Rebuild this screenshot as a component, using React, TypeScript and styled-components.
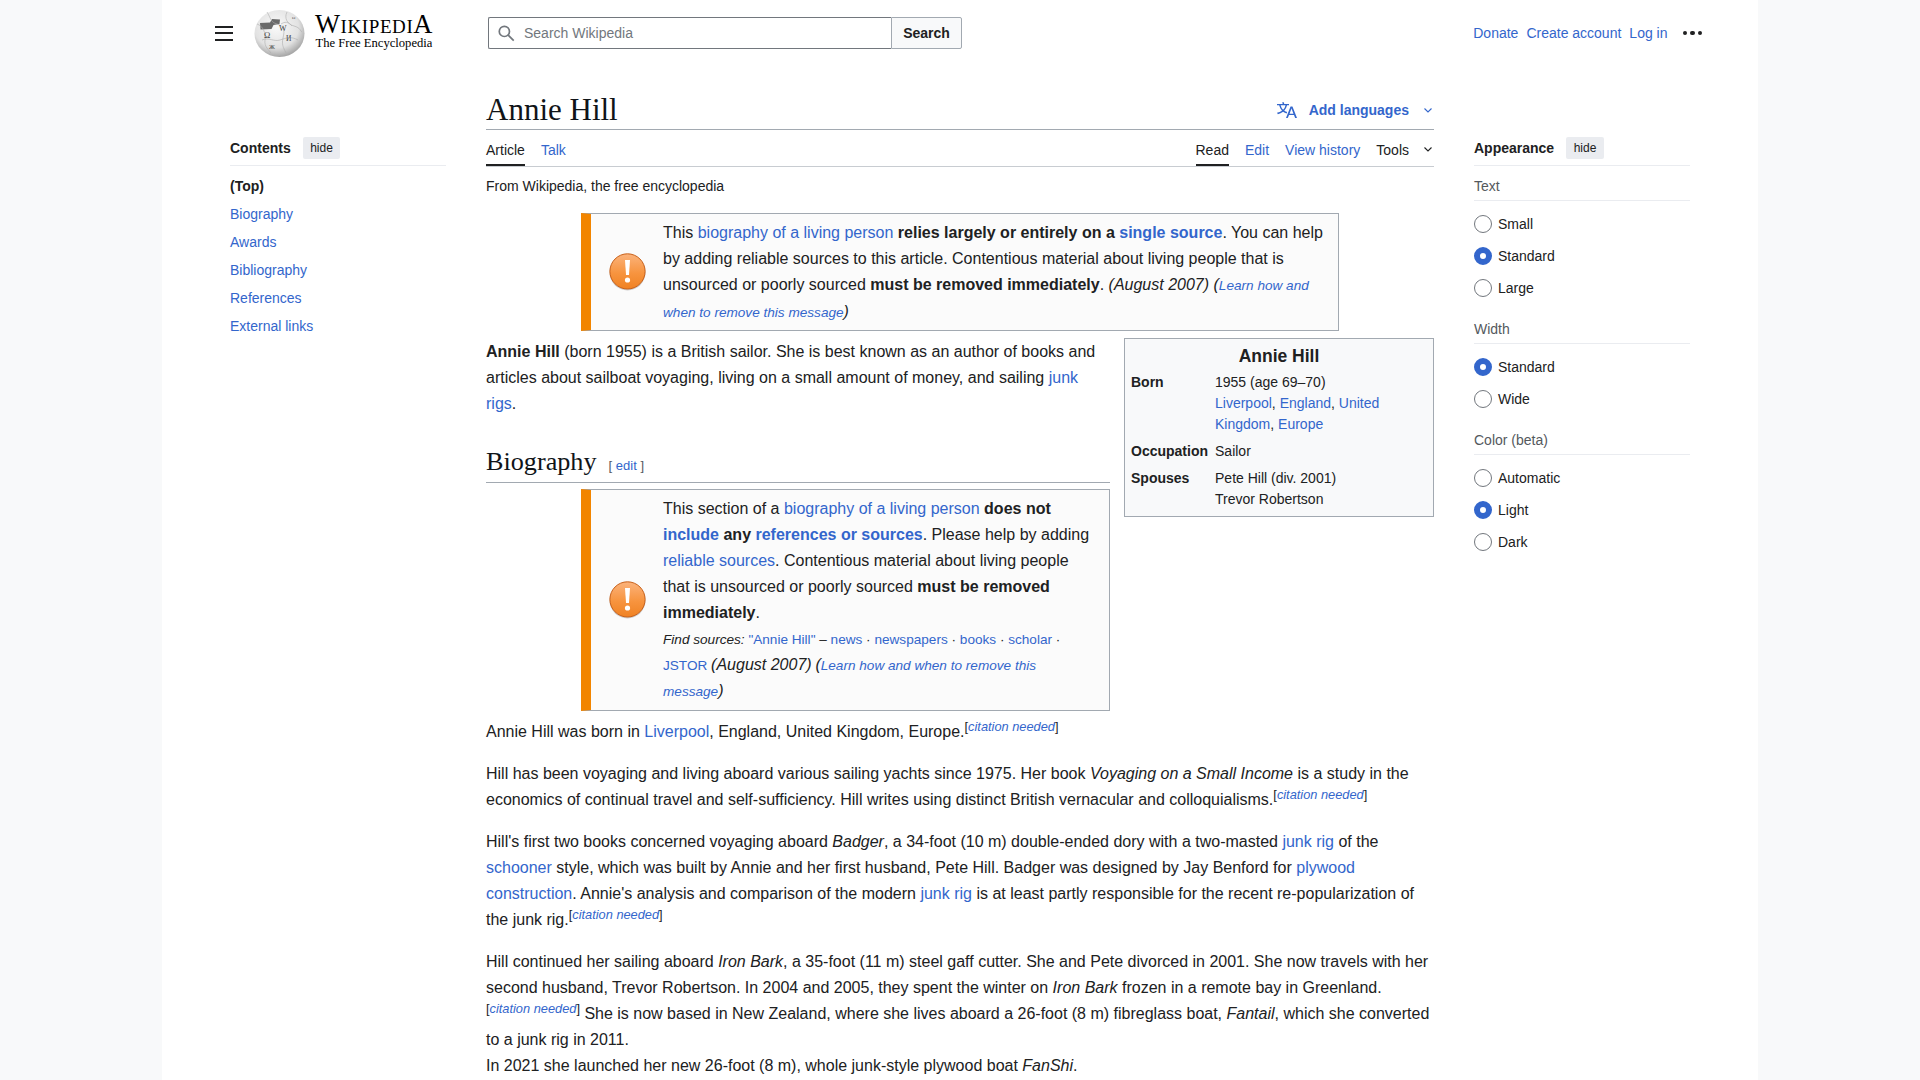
import React from "react";
import styled, { createGlobalStyle } from "styled-components";

const GlobalStyle = createGlobalStyle`
  html, body {
    margin: 0;
    padding: 0;
    height: 100%;
    overflow: hidden;
    background: #f8f9fa;
    color: #202122;
    font-family: "Liberation Sans", Arial, sans-serif;
    font-size: 14px;
  }
  a {
    color: #3366cc;
    text-decoration: none;
  }
`;

const Page = styled.div`
  width: 1596px;
  height: 1080px;
  margin: 0 auto;
  background: #fff;
  overflow: hidden;
`;

/* header */
const Header = styled.header`
  display: flex;
  align-items: center;
  height: 66px;
  padding: 0 56px 0 53px;
`;

const Burger = styled.div`
  width: 18px;
  height: 15px;
  margin-right: 21px;
  border-top: 2px solid #202122;
  border-bottom: 2px solid #202122;
  box-sizing: border-box;
  position: relative;
  &::after {
    content: "";
    position: absolute;
    left: 0;
    right: 0;
    top: 4.5px;
    height: 2px;
    background: #202122;
  }
`;

const Logo = styled.div`
  display: flex;
  align-items: center;
  width: 234px;
`;

const Wordmark = styled.div`
  margin: -2px 0 0 8px;
  font-family: "Liberation Serif", serif;
  color: #000;
  text-align: center;
  width: 122px;
`;

const WordmarkTitle = styled.div`
  font-size: 26.5px;
  line-height: 22px;
  font-variant: small-caps;
  letter-spacing: 0.6px;
  white-space: nowrap;
`;

const WordmarkTag = styled.div`
  font-size: 12.6px;
  line-height: 16px;
  white-space: nowrap;
`;

const Search = styled.form`
  display: flex;
  width: 474px;
  height: 32px;
  margin: 0;
`;

const SearchInput = styled.div`
  flex: 1;
  display: flex;
  align-items: center;
  gap: 9px;
  padding-left: 9px;
  border: 1px solid #72777d;
  border-right: 0;
  border-radius: 2px 0 0 2px;
  color: #72777d;
`;

const SearchButton = styled.div`
  width: 71px;
  display: flex;
  align-items: center;
  justify-content: center;
  border: 1px solid #a2a9b1;
  border-radius: 0 2px 2px 0;
  background: #f8f9fa;
  font-weight: 700;
  box-sizing: border-box;
`;

const UserLinks = styled.nav`
  margin-left: auto;
  display: flex;
  align-items: center;
  gap: 8px;
`;

const Dots = styled.div`
  display: flex;
  gap: 3px;
  margin-left: 7px;
  i {
    width: 4.5px;
    height: 4.5px;
    border-radius: 50%;
    background: #202122;
  }
`;

/* three columns */
const Columns = styled.div`
  display: grid;
  grid-template-columns: 216px 948px 216px;
  column-gap: 40px;
  padding: 0 68px;
`;

const Sidebar = styled.aside`
  padding-top: 71px;
`;

const SideHead = styled.div`
  display: flex;
  align-items: flex-start;
  gap: 12px;
  height: 28px;
  line-height: 22px;
  border-bottom: 1px solid #eaecf0;
  font-weight: 700;
`;

const HideButton = styled.span`
  display: inline-block;
  padding: 0 7.5px;
  height: 22px;
  line-height: 22px;
  background: #eaecf0;
  border-radius: 2px;
  font-size: 12px;
  font-weight: 400;
`;

const TocList = styled.ul`
  list-style: none;
  margin: 6px 0 0;
  padding: 0;
`;

const TocItem = styled.li<{ $top?: boolean }>`
  height: 28px;
  line-height: 28px;
  font-weight: ${(p) => (p.$top ? 700 : 400)};
`;

const OptionGroup = styled.div`
  margin-bottom: 11px;
`;

const OptionLabel = styled.div`
  height: 28px;
  line-height: 28px;
  margin-top: 6px;
  color: #54595d;
  border-bottom: 1px solid #eaecf0;
  margin-bottom: 7px;
`;

const OptionRow = styled.div`
  display: flex;
  align-items: center;
  gap: 6px;
  height: 32px;
`;

const Radio = styled.span<{ $on?: boolean }>`
  width: 18px;
  height: 18px;
  box-sizing: border-box;
  border-radius: 50%;
  background: #fff;
  border: ${(p) => (p.$on ? "6px solid #3366cc" : "1px solid #72777d")};
`;

/* main column */
const Main = styled.main``;

const TitleBar = styled.div`
  display: flex;
  align-items: center;
  justify-content: space-between;
  height: 64px;
  border-bottom: 1px solid #a2a9b1;
  box-sizing: border-box;
`;

const PageTitle = styled.h1`
  margin: 24px 0 0;
  font-family: "Liberation Serif", serif;
  font-weight: 400;
  font-size: 31px;
  line-height: 38px;
  color: #101418;
`;

const LangButton = styled.div`
  display: flex;
  align-items: center;
  margin-top: 25px;
  color: #3366cc;
  font-weight: 700;
`;

const Tabs = styled.div`
  display: flex;
  justify-content: space-between;
  height: 37px;
  border-bottom: 1px solid #c8ccd1;
  box-sizing: border-box;
`;

const TabGroup = styled.div`
  display: flex;
  gap: 16px;
`;

const Tab = styled.a<{ $active?: boolean }>`
  display: flex;
  align-items: center;
  height: 36px;
  box-sizing: border-box;
  padding-top: 5px;
  color: ${(p) => (p.$active ? "#202122" : "#3366cc")};
  border-bottom: 2px solid ${(p) => (p.$active ? "#202122" : "transparent")};
`;

const ToolsTab = styled(Tab)`
  color: #202122;
`;

const Chevron = styled.svg`
  margin-left: 15px;
  margin-right: 2px;
`;

const SiteSub = styled.div`
  margin: 5px 0 13px;
  height: 28px;
  line-height: 28px;
`;

const Body = styled.div`
  font-size: 16px;
  line-height: 26px;
`;

const Ambox = styled.div<{ $wide?: boolean }>`
  display: flex;
  align-items: center;
  box-sizing: border-box;
  width: ${(p) => (p.$wide ? "758px" : "529px")};
  margin-left: 95px;
  border: 1px solid #a2a9b1;
  border-left: 10px solid #f28500;
  background: #fbfbfb;
`;

const AmboxIcon = styled.div`
  flex: 0 0 72px;
  display: flex;
  justify-content: center;
`;

const AmboxText = styled.div`
  flex: 1;
  padding: 6px 14px 4px 0;
`;

const Small = styled.span`
  font-size: 13.6px;
`;

const FindSources = styled.div`
  font-size: 13.6px;
  margin: 1px 0;
`;

const DateNote = styled.i`
  font-size: 16px;
  line-height: 1;
`;

const Infobox = styled.table`
  float: right;
  clear: right;
  width: 310px;
  margin: 7px 0 7px 14px;
  padding: 3px;
  box-sizing: border-box;
  border: 1px solid #a2a9b1;
  background: #f8f9fa;
  font-size: 14px;
  line-height: 21px;
  border-spacing: 3px;
  th, td {
    text-align: left;
    vertical-align: top;
    padding: 3px 0 0;
  }
  td {
    padding-left: 4px;
  }
`;

const InfoTitle = styled.th`
  && {
    font-size: 17.5px;
    line-height: 19px;
    text-align: center;
    padding: 2px 0 0;
  }
`;

const Para = styled.p`
  margin: 8px 0 16px;
`;

const SectionHead = styled.h2`
  margin: 23px 0 6px;
  height: 43px;
  padding-top: 5px;
  box-sizing: border-box;
  overflow: hidden;
  border-bottom: 1px solid #a2a9b1;
  font-family: "Liberation Serif", serif;
  font-weight: 400;
  font-size: 26.2px;
  line-height: 33px;
  color: #101418;
`;

const EditLink = styled.span`
  margin-left: 12px;
  font-family: "Liberation Sans", Arial, sans-serif;
  font-size: 13px;
  color: #54595d;
`;

const Sup = styled.sup`
  font-size: 12.8px;
  line-height: 1;
  vertical-align: super;
  white-space: nowrap;
  a {
    font-style: italic;
  }
`;

const Language = () => (
  <svg width="20" height="20" viewBox="0 0 20 20" fill="#3366cc" style={{ marginRight: 12 }}>
    <path d="M20 18h-1.44a.6.6 0 01-.4-.12.8.8 0 01-.23-.31L17 15h-5l-1 2.54a.8.8 0 01-.22.3.6.6 0 01-.4.14H9l4.55-11.47h1.89zm-3.53-4.31L14.89 9.5a12 12 0 01-.39-1.24q-.09.37-.19.69l-.19.56-1.58 4.19zm-6.3-1.58a13.4 13.4 0 01-2.91-1.41 11.46 11.46 0 002.81-5.37H12V4H7.31a4 4 0 00-.2-.56C6.87 2.79 6.6 2 6.6 2l-1.47.5s.4.89.6 1.5H0v1.33h2.15A11.23 11.23 0 005 10.7a17.2 17.2 0 01-5 2.1q.56.82.87 1.38a23.3 23.3 0 005.22-2.51 15.6 15.6 0 003.56 1.77zM3.63 5.33h4.91a8.1 8.1 0 01-2.45 4.45 9.1 9.1 0 01-2.46-4.45" />
  </svg>
);

const Down = ({ color = "#202122" }: { color?: string }) => (
  <Chevron width="8" height="5" viewBox="0 0 8 5" fill="none" stroke={color} strokeWidth="1.1">
    <path d="M.5.5 4 4 7.5.5" />
  </Chevron>
);

const Globe = () => (
  <svg width="51" height="47" viewBox="0 0 51 47">
    <defs>
      <radialGradient id="sphere" cx="44%" cy="36%" r="68%">
        <stop offset="0" stopColor="#fafafa" />
        <stop offset="0.65" stopColor="#e2e2e2" />
        <stop offset="1" stopColor="#9a9a9a" />
      </radialGradient>
    </defs>
    <ellipse cx="25.5" cy="23.5" rx="25" ry="23.5" fill="url(#sphere)" />
    <path d="M6 13l10-.5 2-3.5 8 .5-.5 4.5-6 1-2 4-11 .5z" fill="#6a6a6a" />
    <g fill="none" stroke="#adadad" strokeWidth=".6">
      <path d="M3 14c6 2 9 9 8 16s4 10 6 13" />
      <path d="M13 2c4 6 3 10 10 12s8 6 6 14 2 12 3 15" />
      <path d="M33 2c-3 6 0 12 7 14s6 5 8 6" />
      <path d="M8 30c7-3 12 2 18 0s11-4 18 0" />
      <path d="M27 14c6-4 9 0 11 2" />
    </g>
    <g fontFamily="Liberation Serif, serif" fill="#444">
      <text x="10" y="28" fontSize="8.5">Ω</text>
      <text x="25" y="21" fontSize="8">W</text>
      <text x="32" y="31" fontSize="7.5">И</text>
      <text x="15" y="39" fontSize="6.5">Ж</text>
      <text x="38" y="9" fontSize="5">ω</text>
    </g>
  </svg>
);

const Warning = () => (
  <svg width="37" height="38" viewBox="0 0 37 38">
    <defs>
      <linearGradient id="amber" x1="0" y1="0" x2="0" y2="1">
        <stop offset="0" stopColor="#fbb37c" />
        <stop offset="0.55" stopColor="#f7943f" />
        <stop offset="1" stopColor="#f08223" />
      </linearGradient>
    </defs>
    <circle cx="18.5" cy="19.4" r="18" fill="#ccc" />
    <circle cx="18.5" cy="18.4" r="17.6" fill="url(#amber)" stroke="#c9611a" strokeWidth="1" />
    <path d="M16 7h5l-1 15h-3z" fill="#fff" />
    <circle cx="18.5" cy="27" r="2.6" fill="#fff" />
  </svg>
);

const Needed = () => (
  <Sup>
    [<a href="#c">citation needed</a>]
  </Sup>
);

const toc = ["Biography", "Awards", "Bibliography", "References", "External links"];

const appearance = [
  { label: "Text", options: [["Small"], ["Standard", true], ["Large"]] },
  { label: "Width", options: [["Standard", true], ["Wide"]] },
  { label: "Color (beta)", options: [["Automatic"], ["Light", true], ["Dark"]] },
] as { label: string; options: [string, boolean?][] }[];

export default function App() {
  return (
    <Page>
      <GlobalStyle />
      <Header>
        <Burger />
        <Logo>
          <Globe />
          <Wordmark>
            <WordmarkTitle>WikipediA</WordmarkTitle>
            <WordmarkTag>The Free Encyclopedia</WordmarkTag>
          </Wordmark>
        </Logo>
        <Search>
          <SearchInput>
            <svg width="17" height="17" viewBox="0 0 20 20" fill="none" stroke="#72777d" strokeWidth="2">
              <circle cx="7.5" cy="7.5" r="6" />
              <path d="M12 12l6.5 6.5" />
            </svg>
            Search Wikipedia
          </SearchInput>
          <SearchButton>Search</SearchButton>
        </Search>
        <UserLinks>
          <a href="#d">Donate</a>
          <a href="#c">Create account</a>
          <a href="#l">Log in</a>
          <Dots>
            <i />
            <i />
            <i />
          </Dots>
        </UserLinks>
      </Header>
      <Columns>
        <Sidebar>
          <SideHead>
            Contents <HideButton>hide</HideButton>
          </SideHead>
          <TocList>
            <TocItem $top>(Top)</TocItem>
            {toc.map((t) => (
              <TocItem key={t}>
                <a href="#t">{t}</a>
              </TocItem>
            ))}
          </TocList>
        </Sidebar>
        <Main>
          <TitleBar>
            <PageTitle>Annie Hill</PageTitle>
            <LangButton>
              <Language />
              Add languages
              <Down color="#3366cc" />
            </LangButton>
          </TitleBar>
          <Tabs>
            <TabGroup>
              <Tab $active>Article</Tab>
              <Tab href="#t">Talk</Tab>
            </TabGroup>
            <TabGroup>
              <Tab $active>Read</Tab>
              <Tab href="#e">Edit</Tab>
              <Tab href="#h">View history</Tab>
              <ToolsTab as="span">
                Tools
                <Down />
              </ToolsTab>
            </TabGroup>
          </Tabs>
          <SiteSub>From Wikipedia, the free encyclopedia</SiteSub>
          <Body>
            <Ambox $wide>
              <AmboxIcon>
                <Warning />
              </AmboxIcon>
              <AmboxText>
                This <a href="#b">biography of a living person</a> <b>relies largely or entirely on a <a href="#s">single source</a></b>. You can help by adding reliable sources to this article. Contentious material about living people that is unsourced or poorly sourced <b>must be removed immediately</b>. <i>(August 2007)</i> <i>(<Small><a href="#l">Learn how and when to remove this message</a></Small>)</i>
              </AmboxText>
            </Ambox>
            <Infobox>
              <tbody>
                <tr>
                  <InfoTitle colSpan={2}>Annie Hill</InfoTitle>
                </tr>
                <tr>
                  <th>Born</th>
                  <td>
                    1955 (age 69–70)
                    <br />
                    <a href="#l">Liverpool</a>, <a href="#e">England</a>, <a href="#u">United Kingdom</a>, <a href="#eu">Europe</a>
                  </td>
                </tr>
                <tr>
                  <th>Occupation</th>
                  <td>Sailor</td>
                </tr>
                <tr>
                  <th>Spouses</th>
                  <td>
                    Pete Hill (div. 2001)
                    <br />
                    Trevor Robertson
                  </td>
                </tr>
              </tbody>
            </Infobox>
            <Para>
              <b>Annie Hill</b> (born 1955) is a British sailor. She is best known as an author of books and articles about sailboat voyaging, living on a small amount of money, and sailing <a href="#j">junk rigs</a>.
            </Para>
            <SectionHead>
              Biography
              <EditLink>
                [ <a href="#e">edit</a> ]
              </EditLink>
            </SectionHead>
            <Ambox>
              <AmboxIcon>
                <Warning />
              </AmboxIcon>
              <AmboxText>
                This section of a <a href="#b">biography of a living person</a> <b>does not <a href="#i">include</a> any <a href="#r">references or sources</a></b>. Please help by adding <a href="#r">reliable sources</a>. Contentious material about living people that is unsourced or poorly sourced <b>must be removed immediately</b>.
                <FindSources>
                  <i>Find sources:</i> <a href="#a">"Annie Hill"</a> – <a href="#n">news</a> · <a href="#n">newspapers</a> · <a href="#b">books</a> · <a href="#s">scholar</a> · <a href="#j">JSTOR</a> <DateNote>(August 2007)</DateNote> <DateNote>(<Small><a href="#l">Learn how and when to remove this message</a></Small>)</DateNote>
                </FindSources>
              </AmboxText>
            </Ambox>
            <Para>
              Annie Hill was born in <a href="#l">Liverpool</a>, England, United Kingdom, Europe.<Needed />
            </Para>
            <Para>
              Hill has been voyaging and living aboard various sailing yachts since 1975. Her book <i>Voyaging on a Small Income</i> is a study in the economics of continual travel and self-sufficiency. Hill writes using distinct British vernacular and colloquialisms.<Needed />
            </Para>
            <Para>
              Hill's first two books concerned voyaging aboard <i>Badger</i>, a 34-foot (10 m) double-ended dory with a two-masted <a href="#j">junk rig</a> of the <a href="#s">schooner</a> style, which was built by Annie and her first husband, Pete Hill. Badger was designed by Jay Benford for <a href="#p">plywood construction</a>. Annie's analysis and comparison of the modern <a href="#j">junk rig</a> is at least partly responsible for the recent re-popularization of the junk rig.<Needed />
            </Para>
            <Para>
              Hill continued her sailing aboard <i>Iron Bark</i>, a 35-foot (11 m) steel gaff cutter. She and Pete divorced in 2001. She now travels with her second husband, Trevor Robertson. In 2004 and 2005, they spent the winter on <i>Iron Bark</i> frozen in a remote bay in Greenland.<Needed /> She is now based in New Zealand, where she lives aboard a 26-foot (8 m) fibreglass boat, <i>Fantail</i>, which she converted to a junk rig in 2011.
              <br />
              In 2021 she launched her new 26-foot (8 m), whole junk-style plywood boat <i>FanShi</i>.
            </Para>
          </Body>
        </Main>
        <Sidebar>
          <SideHead>
            Appearance <HideButton>hide</HideButton>
          </SideHead>
          {appearance.map((g) => (
            <OptionGroup key={g.label}>
              <OptionLabel>{g.label}</OptionLabel>
              {g.options.map(([name, on]) => (
                <OptionRow key={name}>
                  <Radio $on={on} />
                  {name}
                </OptionRow>
              ))}
            </OptionGroup>
          ))}
        </Sidebar>
      </Columns>
    </Page>
  );
}
